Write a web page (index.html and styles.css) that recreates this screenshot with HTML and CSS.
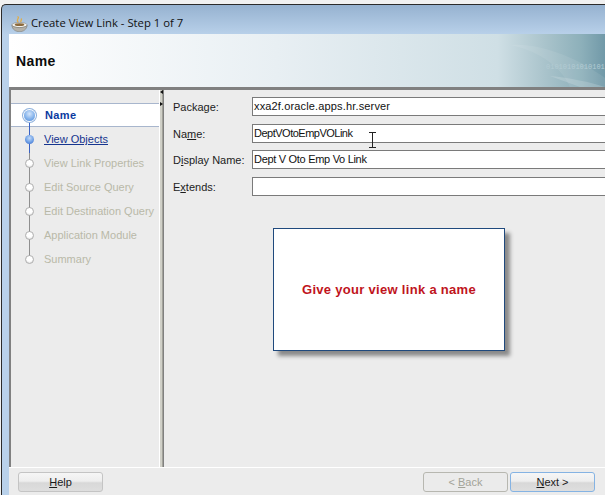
FILE: index.html
```html
<!DOCTYPE html>
<html lang="en">
<head>
<meta charset="utf-8">
<title>Create View Link - Step 1 of 7</title>
<link rel="stylesheet" href="styles.css">
</head>
<body>
<div class="window">
  <div class="titlebar">
    <svg class="cup" width="17" height="16" viewBox="0 0 17 16">
      <path d="M6.500 .5 C9.500 2 4 3.500 7.500 6.500 M10 2.500 C11.500 4 9 4.500 10 6.500" fill="none" stroke="#e0ad4a" stroke-width="1.300"/>
      <ellipse cx="8.500" cy="9" rx="7.700" ry="2.600" fill="#f2f2ee" stroke="#8d8a80" stroke-width=".6"/>
      <ellipse cx="8.500" cy="8.700" rx="4.800" ry="1.400" fill="#8b6a3c"/>
      <path d="M.8 9.500 C1.500 13.500 4.500 15.700 8.500 15.700 C12.500 15.700 15.500 13.500 16.200 9.500 C13 12.300 4 12.300 .8 9.500Z" fill="#b4b1a8" stroke="#75726a" stroke-width=".5"/>
    </svg>
    <span class="title">Create View Link - Step 1 of 7</span>
  </div>
  <div class="content">
    <header class="banner">
      <h1>Name</h1>
      <svg class="wave" width="95" height="53" viewBox="0 0 95 53">
        <path d="M0 11 C30 8 70 25 95 44 L95 53 L60 53 C50 30 25 16 0 11Z" fill="#ffffff" opacity=".08"/>
        <path d="M40 42 C60 44 80 48 95 53 L70 53 Z" fill="#ffffff" opacity=".16"/>
      </svg>
      <span class="binary">01010101010101</span>
    </header>
    <div class="main">
      <nav class="steps">
        <ol class="step-list">
          <li class="step current"><span class="node"></span><span class="step-label">Name</span></li>
          <li class="step next"><span class="node"></span><a class="step-label" href="#">View Objects</a></li>
          <li class="step off"><span class="node"></span><span class="step-label">View Link Properties</span></li>
          <li class="step off"><span class="node"></span><span class="step-label">Edit Source Query</span></li>
          <li class="step off"><span class="node"></span><span class="step-label">Edit Destination Query</span></li>
          <li class="step off"><span class="node"></span><span class="step-label">Application Module</span></li>
          <li class="step off last"><span class="node"></span><span class="step-label">Summary</span></li>
        </ol>
      </nav>
      <div class="splitter"><i class="arrow left"></i><i class="arrow right"></i></div>
      <section class="form">
        <div class="field"><label>Packa<u>g</u>e:</label><span class="input loose">xxa2f.oracle.apps.hr.server</span></div>
        <div class="field"><label>Na<u>m</u>e:</label><span class="input tight">DeptVOtoEmpVOLink</span></div>
        <div class="field"><label>D<u>i</u>splay Name:</label><span class="input snug">Dept V Oto Emp Vo Link</span></div>
        <div class="field"><label>E<u>x</u>tends:</label><span class="input"></span></div>
        <div class="callout">Give your view link a name</div>
        <svg class="ibeam" width="9" height="16" viewBox="0 0 9 16">
          <path d="M1 .5H8M1 15.500H8M4.500 .5V15.500" fill="none" stroke="#222" stroke-width="1"/>
        </svg>
      </section>
    </div>
    <footer class="footer">
      <button class="btn" type="button"><u>H</u>elp</button>
      <div class="nav-buttons">
        <button class="btn disabled" type="button">&lt; <u>B</u>ack</button>
        <button class="btn default" type="button"><u>N</u>ext &gt;</button>
      </div>
    </footer>
  </div>
</div>
</body>
</html>
```
FILE: styles.css
```css
* { box-sizing: border-box; }
html, body { margin: 0; padding: 0; }
body {
  width: 605px;
  height: 495px;
  overflow: hidden;
  background: #f1f1f1;
  padding: 4px 0 0 1px;
  font-family: "Liberation Sans", Arial, sans-serif;
  font-size: 11px;
  color: #1c1c1c;
}
.window {
  width: 604px;
  height: 491px;
  border-top: 1px solid #2b2b2b;
  border-left: 1px solid #2b2b2b;
  border-top-left-radius: 5px;
  background: linear-gradient(#96b2d0, #b9d1ea 30px);
  display: flex;
  flex-direction: column;
  padding-left: 7px;
}
.titlebar {
  height: 29px;
  margin-left: -7px;
  padding: 8px 0 0 9px;
  display: flex;
  align-items: center;
  gap: 3px;
}
.cup { flex: none; }
.title {
  font-family: "Open Sans", sans-serif;
  font-size: 11.300px;
  color: #111;
  margin-top: -3px;
}
.content { flex: 1; display: flex; flex-direction: column; min-height: 0; background: #ececec; }
.banner {
  position: relative;
  height: 53px;
  flex: none;
  background: linear-gradient(90deg, #ffffff 0%, #e8eff3 45%, #cfdfe5 82%, #a9c3cb 90%, #8db0ba 96%, #7199a8 100%);
  display: flex;
  align-items: center;
  padding-left: 7px;
  overflow: hidden;
}
.banner h1 {
  margin: 0;
  font-size: 14px;
  letter-spacing: .4px;
  font-weight: bold;
  color: #0c0c0c;
}
.wave { position: absolute; right: 0; top: 0; }
.binary {
  position: absolute;
  right: 0;
  top: 28px;
  width: 59px;
  overflow: hidden;
  font-family: "Liberation Mono", monospace;
  font-size: 7px;
  line-height: 11px;
  color: #b3cbd3;
}
.main {
  flex: 1;
  min-height: 0;
  display: flex;
  border-top: 3px solid #808080;
}
.steps {
  width: 150px;
  flex: none;
  border-left: 2px solid #808080;
  padding-top: 13px;
  background: #ececec;
}
.step-list { list-style: none; margin: 0; padding: 0; }
.step {
  position: relative;
  height: 24px;
  display: flex;
  align-items: center;
  padding-left: 33px;
}
.step.current {
  background: #fff;
  border-top: 1px solid #a8b6cd;
  border-bottom: 1px solid #a8b6cd;
  padding-left: 34px;
}
.step-label { font-size: 11px; white-space: nowrap; }
.current .step-label { font-weight: bold; letter-spacing: .4px; color: #0a3aa0; }
.next .step-label { color: #16358f; text-decoration: underline; }
.off .step-label { color: #b9b9a8; }
.node {
  position: absolute;
  left: 14px;
  top: 8px;
  width: 9px;
  height: 9px;
  border-radius: 50%;
  z-index: 2;
}
.off .node {
  background: radial-gradient(circle at 50% 35%, #fff 45%, #d4d4d4 100%);
  border: 1px solid #b0b0b0;
}
.next .node {
  background: radial-gradient(circle at 50% 35%, #c4dbf7 0, #6d9fe6 55%, #2f5fc4 100%);
}
.current .node {
  left: 13px;
  top: 6px;
  width: 11px;
  height: 11px;
  background: radial-gradient(circle at 50% 35%, #d5e6fb 0, #7caeea 60%, #5d8fd9 100%);
  box-shadow: 0 0 0 1px #fff, 0 0 0 2px #8eb1dc;
}
.step::after {
  content: "";
  position: absolute;
  left: 18px;
  top: 14px;
  width: 1px;
  height: 24px;
  background: #8f8f8f;
  z-index: 1;
}
.current::after { height: 22px; background: #3a62c4; }
.next::after { background: linear-gradient(#3a62c4 50%, #8f8f8f 50%); }
.last::after { display: none; }
.splitter {
  width: 4px;
  flex: none;
  position: relative;
  background: #d0d0c8;
  border-left: 1px solid #fff;
  border-right: 1px solid #a3a39b;
}
.arrow {
  position: absolute;
  left: 0;
  width: 0;
  height: 0;
  border-top: 2px solid transparent;
  border-bottom: 2px solid transparent;
}
.arrow.left { top: 0; border-right: 3px solid #111; }
.arrow.right { top: 12px; border-left: 3px solid #111; }
.form {
  flex: 1;
  min-width: 0;
  position: relative;
  border-left: 1px solid #808080;
  padding: 7px 0 0 9px;
  background: #ececec;
  overflow: hidden;
}
.field {
  display: flex;
  align-items: center;
  height: 19px;
  margin-bottom: 8px;
}
.field:nth-child(2) { margin-bottom: 7px; }
.field label { width: 79px; flex: none; }
.input {
  flex: 1;
  height: 19px;
  background: #fff;
  border: 1px solid #7a7a7a;
  border-right: 0;
  padding: 0 0 0 1px;
  line-height: 17px;
  color: #111;
}
.input.loose { letter-spacing: .15px; }
.input.tight { letter-spacing: -.5px; }
.input.snug { letter-spacing: -.3px; }
.callout {
  width: 232px;
  height: 123px;
  margin: 32px 0 0 100px;
  background: #fff;
  border: 1px solid #1f497d;
  box-shadow: 5px 5px 4px #8a8a8a;
  display: flex;
  align-items: center;
  justify-content: center;
  font-size: 13px;
  letter-spacing: .3px;
  font-weight: bold;
  color: #c0141c;
}
.ibeam { position: absolute; left: 204px; top: 42px; }
.footer {
  height: 28px;
  flex: none;
  border-top: 1px solid #fff;
  display: flex;
  justify-content: space-between;
  padding: 4px 10px 0 9px;
  background: #ececec;
}
.nav-buttons { display: flex; gap: 2px; }
.btn {
  width: 85px;
  height: 20px;
  padding: 0;
  font-family: inherit;
  font-size: 11px;
  color: #1a1a1a;
  border: 1px solid #c4c4c4;
  border-radius: 3px;
  background: linear-gradient(#f6f6f6, #eeeeee 45%, #d8d8d8 55%, #dedede);
}
.btn.disabled { background: #ebebeb; color: #a3a398; border-color: #b7b7b0; }
.btn.default { border-color: #85b3e3; }
```
